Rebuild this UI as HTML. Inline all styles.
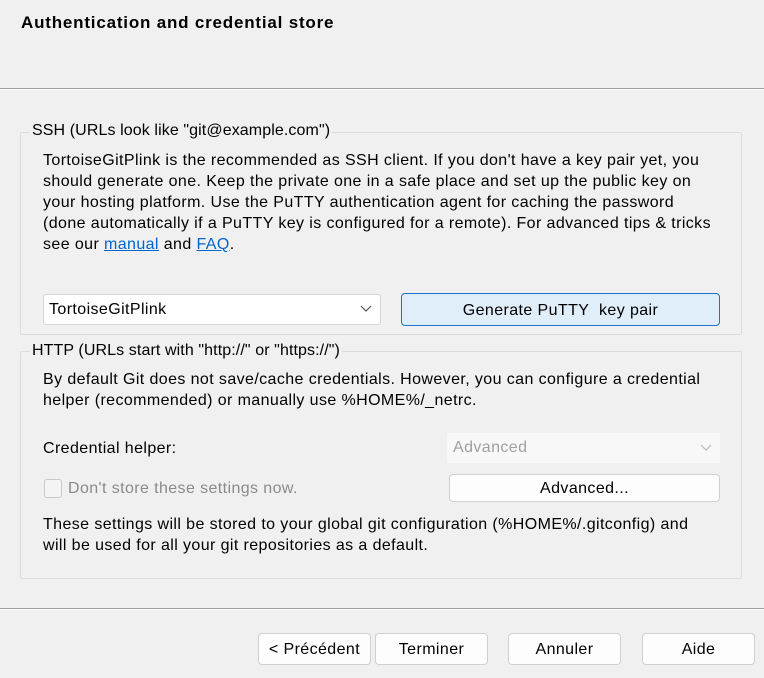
<!DOCTYPE html>
<html><head><meta charset="utf-8"><style>
*{box-sizing:border-box;margin:0;padding:0}
body{width:764px;height:678px;background:#f0f0f0;font-family:"Liberation Sans",sans-serif;font-size:16px;letter-spacing:0.4px;color:#000;position:relative;overflow:hidden}
.a{position:absolute;white-space:nowrap}
.hr{position:absolute;left:0;width:764px;height:2px;border-top:1px solid #a0a0a0;border-bottom:1px solid #fff}
.gb{position:absolute;border:1px solid #dcdcdc;border-radius:2px}
.leg{position:absolute;background:#f0f0f0;padding:0 2px;letter-spacing:0.1px}
.btn{position:absolute;background:#fdfdfd;border:1px solid #d0d0d0;border-radius:4px;text-align:center;font-size:16px}
a{color:#0066cc;text-decoration:underline}
.p{line-height:21px}
</style></head><body>
<div class="a" style="left:21px;top:13px;font-weight:bold;font-size:17px;letter-spacing:0.8px">Authentication and credential store</div>
<div class="hr" style="top:88px"></div>

<div class="gb" style="left:20px;top:132px;width:722px;height:203px"></div>
<div class="leg a" style="left:30px;top:122px">SSH (URLs look like "git@example.com")</div>
<div class="a p" style="left:43px;top:150px">TortoiseGitPlink is the recommended as SSH client. If you don't have a key pair yet, you<br>should generate one. Keep the private one in a safe place and set up the public key on<br>your hosting platform. Use the PuTTY authentication agent for caching the password<br>(done automatically if a PuTTY key is configured for a remote). For advanced tips &amp; tricks<br>see our <a>manual</a> and <a>FAQ</a>.</div>
<div style="position:absolute;left:43px;top:294px;width:338px;height:31px;background:#fff;border:1px solid #d6d6d6;border-radius:3px"></div>
<div class="a" style="left:49px;top:301px">TortoiseGitPlink</div>
<svg class="a" style="left:360px;top:305px" width="12" height="8"><path d="M1 1l5 5 5-5" fill="none" stroke="#555" stroke-width="1.2"/></svg>
<div class="btn" style="left:401px;top:293px;width:319px;height:33px;background:#e0eef9;border:1.5px solid #1a73c8;line-height:33px">Generate PuTTY&nbsp; key pair</div>

<div class="gb" style="left:20px;top:351px;width:722px;height:228px"></div>
<div class="leg a" style="left:30px;top:342px">HTTP (URLs start with "http://" or "https://")</div>
<div class="a p" style="left:43px;top:369px">By default Git does not save/cache credentials. However, you can configure a credential<br>helper (recommended) or manually use %HOME%/_netrc.</div>
<div class="a" style="left:43px;top:440px">Credential helper:</div>
<div style="position:absolute;left:447px;top:433px;width:273px;height:30px;background:#f8f8f8;border-radius:2px"></div>
<div class="a" style="left:453px;top:439px;color:#a0a0a0">Advanced</div>
<svg class="a" style="left:700px;top:444px" width="12" height="8"><path d="M1 1l5 5 5-5" fill="none" stroke="#bbb" stroke-width="1.2"/></svg>
<div style="position:absolute;left:44px;top:479px;width:18px;height:19px;border:1px solid #c8c8c8;border-radius:3px;background:#f4f4f4"></div>
<div class="a" style="left:68px;top:480px;color:#8a8a8a">Don't store these settings now.</div>
<div class="btn" style="left:449px;top:474px;width:271px;height:28px;line-height:28px">Advanced...</div>
<div class="a p" style="left:43px;top:514px">These settings will be stored to your global git configuration (%HOME%/.gitconfig) and<br>will be used for all your git repositories as a default.</div>

<div class="hr" style="top:608px"></div>
<div class="btn" style="left:258px;top:633px;width:113px;height:32px;line-height:32px">&lt; Précédent</div>
<div class="btn" style="left:375px;top:633px;width:113px;height:32px;line-height:32px">Terminer</div>
<div class="btn" style="left:508px;top:633px;width:113px;height:32px;line-height:32px">Annuler</div>
<div class="btn" style="left:642px;top:633px;width:113px;height:32px;line-height:32px">Aide</div>
</body></html>
